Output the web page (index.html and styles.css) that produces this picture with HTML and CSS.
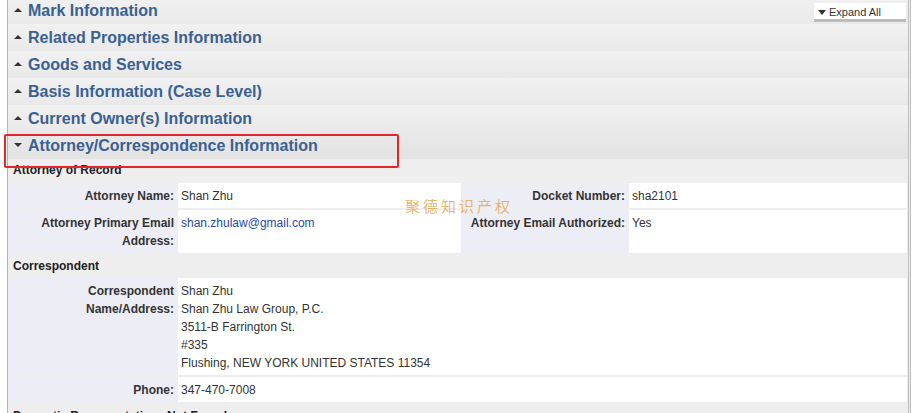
FILE: index.html
```html
<!DOCTYPE html>
<html lang="en">
<head>
    <meta charset="UTF-8">
    <title>Attorney/Correspondence Information</title>
    <link rel="stylesheet" href="styles.css">
</head>
<body>
    <div class="page">
        <div class="sections">
            <div class="sec-head"><span class="tri tri-up"></span>Mark Information</div>
            <div class="sec-head"><span class="tri tri-up"></span>Related Properties Information</div>
            <div class="sec-head"><span class="tri tri-up"></span>Goods and Services</div>
            <div class="sec-head"><span class="tri tri-up"></span>Basis Information (Case Level)</div>
            <div class="sec-head"><span class="tri tri-up"></span>Current Owner(s) Information</div>
            <div class="sec-head sec-open"><span class="tri tri-down"></span>Attorney/Correspondence Information</div>

            <div class="sub-head sub-first">Attorney of Record</div>
            <table class="info">
                <colgroup>
                    <col class="c-lbl">
                    <col class="c-val">
                    <col class="c-lbl2">
                    <col>
                </colgroup>
                <tr>
                    <td class="lbl">Attorney Name:</td>
                    <td class="val">Shan Zhu</td>
                    <td class="lbl">Docket Number:</td>
                    <td class="val">sha2101</td>
                </tr>
                <tr>
                    <td class="lbl">Attorney Primary Email<br>Address:</td>
                    <td class="val"><a href="#">shan.zhulaw@gmail.com</a></td>
                    <td class="lbl">Attorney Email Authorized:</td>
                    <td class="val">Yes</td>
                </tr>
            </table>

            <div class="sub-head sub-tight">Correspondent</div>
            <table class="info">
                <colgroup>
                    <col class="c-lbl">
                    <col>
                </colgroup>
                <tr>
                    <td class="lbl">Correspondent<br>Name/Address:</td>
                    <td class="val">Shan Zhu<br>Shan Zhu Law Group, P.C.<br>3511-B Farrington St.<br>#335<br>Flushing, NEW YORK UNITED STATES 11354</td>
                </tr>
                <tr>
                    <td class="lbl">Phone:</td>
                    <td class="val">347-470-7008</td>
                </tr>
            </table>

            <div class="sub-head">Domestic Representative - Not Found</div>
        </div>

        <div class="expand-all"><span class="tri tri-down"></span>Expand All</div>
        <div class="mark-box"></div>
        <div class="watermark">聚德知识产权</div>
    </div>
</body>
</html>
```

FILE: styles.css
```css
*{ padding: 0; margin: 0; box-sizing: border-box; }

body{
    background: #fff;
    font-family: "Liberation Sans", Arial, sans-serif;
    color: #333;
    overflow: hidden;
}

.page{
    position: relative;
    height: 413px;
    overflow: hidden;
}
.sections{
    margin: -3px 0 0 7px;
    width: 904px;
    border-left: 1px solid #b4b4b4;
    border-right: 3px double #bcbcbc;
    background: #eeeeee;
    padding-bottom: 40px;
}

.sec-head{
    height: 27px;
    line-height: 27px;
    padding-left: 6px;
    font-size: 16px;
    font-weight: bold;
    color: #3a6192;
    background: linear-gradient(#f1f1f1, #e9e9e9);
}
.sec-open{
    background: linear-gradient(#e9e9e9, #e3e3e3);
}

.tri{
    display: inline-block;
    width: 0;
    height: 0;
    border-left: 4px solid transparent;
    border-right: 4px solid transparent;
    margin-right: 6px;
    vertical-align: middle;
    position: relative;
    top: -2px;
}
.tri-up{ border-bottom: 4px solid #333; }
.tri-down{ border-top: 4px solid #333; }

.sub-head{
    height: 24px;
    line-height: 24px;
    padding: 1px 0 0 5px;
    font-size: 12px;
    font-weight: bold;
    color: #222;
}
.sub-first{
    height: 23px;
    line-height: 23px;
    padding-top: 0;
}
.sub-tight{
    height: 23px;
    line-height: 24px;
    padding-top: 0;
}

.info{
    width: 100%;
    table-layout: fixed;
    border-collapse: separate;
    border-spacing: 1px 2px;
    margin: -1px 0 -1px 0;
}
.c-lbl{ width: 168px; }
.c-val{ width: 283px; }
.c-lbl2{ width: 166px; }

.info td{
    font-size: 12px;
    line-height: 18px;
    vertical-align: top;
    padding: 4px 4px 3px 4px;
}
.info .lbl{
    text-align: right;
    font-weight: bold;
    background: #ededf6;
    color: #333;
    padding-right: 3px;
}
.info .val{
    background: #fff;
    color: #333;
    padding-left: 3px;
}
.info a{
    color: #2848a4;
    text-decoration: none;
}

.expand-all{
    position: absolute;
    left: 814px;
    top: 3px;
    width: 92px;
    height: 19px;
    background: #fff;
    border-bottom: 3px solid #bdbdbd;
    font-size: 11px;
    line-height: 17px;
    padding: 1px 0 0 4px;
    color: #333;
}
.expand-all .tri{
    margin-right: 3px;
    top: -1px;
    border-top-width: 5px;
}

.mark-box{
    position: absolute;
    left: 4px;
    top: 134px;
    width: 395px;
    height: 34px;
    border: 2px solid #e3262b;
    border-radius: 2px;
}

.watermark{
    position: absolute;
    left: 405px;
    top: 197px;
    font-family: "Noto Sans CJK SC", "DejaVu Serif", serif;
    font-size: 15px;
    line-height: 18px;
    letter-spacing: 3px;
    color: rgba(226, 160, 60, 0.75);
}
```
